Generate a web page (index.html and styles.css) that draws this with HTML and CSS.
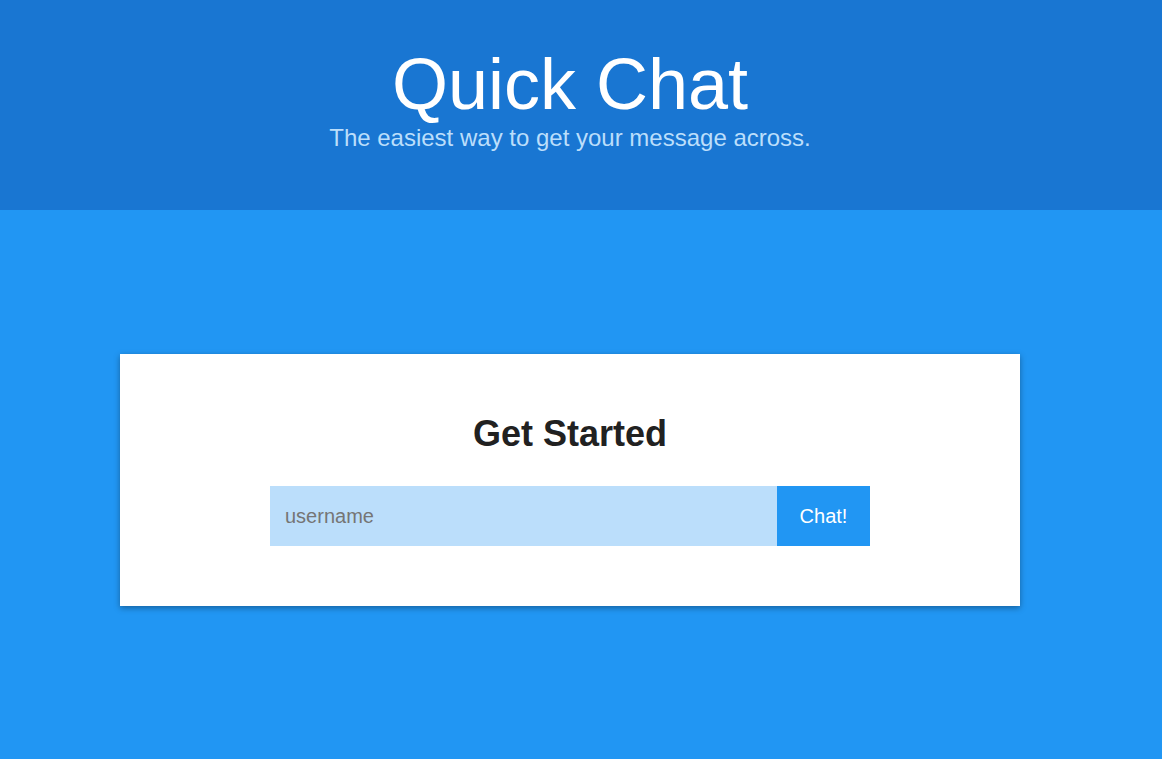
FILE: index.html
```html
<!DOCTYPE html>
<html>
<head>
<meta charset="utf-8">
<link rel="stylesheet" href="styles.css">
</head>
<body>
<header class="top">
  <div class="wrap">
    <h1 class="title">Quick Chat</h1>
    <p class="subtitle">The easiest way to get your message across.</p>
  </div>
</header>
<main class="main">
  <div class="wrap wrap-center">
    <section class="card">
      <h2 class="card-title">Get Started</h2>
      <form class="join">
        <input class="join-input" type="text" placeholder="username">
        <button class="join-btn" type="button">Chat!</button>
      </form>
    </section>
  </div>
</main>
</body>
</html>
```
FILE: styles.css
```css
html, body {
  margin: 0;
  padding: 0;
  height: 100%;
}
body {
  font-family: "Liberation Sans", Arial, sans-serif;
  background: #2196f3;
  overflow: hidden;
}
.wrap {
  width: 1140px;
  text-align: center;
}
.wrap-center {
  display: flex;
  justify-content: center;
}
.top {
  background: #1976d2;
  height: 210px;
  box-sizing: border-box;
  padding-top: 44px;
}
.title {
  margin: 0;
  font-size: 72px;
  font-weight: normal;
  line-height: 80px;
  color: #fff;
}
.subtitle {
  margin: 0;
  font-size: 24px;
  line-height: 28px;
  color: #bbdefb;
}
.main {
  padding-top: 144px;
}
.card {
  width: 900px;
  height: 252px;
  box-sizing: border-box;
  background: #fff;
  box-shadow: 0 2px 6px rgba(0, 0, 0, 0.35);
  padding-top: 58px;
  display: flex;
  flex-direction: column;
  align-items: center;
}
.card-title {
  margin: 0;
  font-size: 36px;
  line-height: 44px;
  font-weight: bold;
  color: #212121;
}
.join {
  margin-top: 30px;
  display: flex;
  width: 600px;
  height: 60px;
}
.join-input {
  flex: 1;
  border: none;
  outline: none;
  background: #bbdefb;
  padding: 0 15px;
  font-family: "Liberation Sans", Arial, sans-serif;
  font-size: 20px;
  color: #212121;
}
.join-input::placeholder {
  color: #757575;
}
.join-btn {
  width: 93px;
  border: none;
  background: #2196f3;
  color: #fff;
  font-family: "Liberation Sans", Arial, sans-serif;
  font-size: 20px;
  padding: 0;
}
```
